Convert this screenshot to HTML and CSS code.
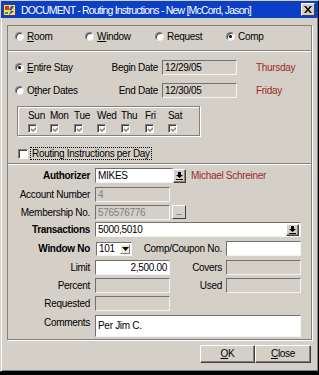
FILE: index.html
```html
<!DOCTYPE html>
<html lang="en">
<head>
    <meta charset="UTF-8">
    <title>DOCUMENT - Routing Instructions</title>
    <link rel="stylesheet" href="styles.css">
</head>
<body>
    <div class="window">
        <div class="titlebar">
            <svg class="app-icon" width="14" height="14" viewBox="0 0 14 14">
                <rect x="0.5" y="1.5" width="12" height="11" fill="#f4e04a" stroke="#3a3a9a"/>
                <rect x="2" y="3" width="4" height="4" fill="#d23030"/>
                <path d="M8 3 L11 3 L8 8 L11 8 L6 12 L8 7 L6 7 Z" fill="#2050d0"/>
                <rect x="2" y="9" width="3" height="2" fill="#30a040"/>
            </svg>
            <span class="title">DOCUMENT - Routing Instructions - New [McCord, Jason]</span>
            <span class="close-btn">
                <svg width="8" height="7" viewBox="0 0 8 7"><path d="M0 0h2l2 2.5L6 0h2L5 3.5 8 7H6L4 4.5 2 7H0l3-3.5z"/></svg>
            </span>
        </div>

        <div class="client">
            <div class="frame">
                <div class="section type-row">
                    <span class="radio"><span class="dot"></span><span><u>R</u>oom</span></span>
                    <span class="radio"><span class="dot"></span><span><u>W</u>indow</span></span>
                    <span class="radio"><span class="dot"></span><span>Request</span></span>
                    <span class="radio"><span class="dot on"></span><span>Comp</span></span>
                </div>

                <div class="section dates">
                    <div class="date-grid">
                        <span class="radio"><span class="dot on"></span><span><u>E</u>ntire Stay</span></span>
                        <span class="lbl">Begin Date</span>
                        <span class="field off dark">12/29/05</span>
                        <span class="day-name">Thursday</span>

                        <span class="radio"><span class="dot"></span><span>O<u>t</u>her Dates</span></span>
                        <span class="lbl">End Date</span>
                        <span class="field off dark">12/30/05</span>
                        <span class="day-name">Friday</span>
                    </div>

                    <div class="days">
                        <div class="day"><span>Sun</span><span class="cb small checked"></span></div>
                        <div class="day"><span>Mon</span><span class="cb small checked"></span></div>
                        <div class="day"><span>Tue</span><span class="cb small checked"></span></div>
                        <div class="day"><span>Wed</span><span class="cb small checked"></span></div>
                        <div class="day"><span>Thu</span><span class="cb small checked"></span></div>
                        <div class="day"><span>Fri</span><span class="cb small checked"></span></div>
                        <div class="day"><span>Sat</span><span class="cb small checked"></span></div>
                    </div>

                    <div class="per-day">
                        <span class="cb"></span>
                        <span class="focus">Routing Instructions per Day</span>
                    </div>
                </div>

                <div class="section details">
                    <span class="lbl bold">Authorizer</span>
                    <div class="span-3 row-flex">
                        <span class="field auth">MIKES</span>
                        <span class="drop-btn">
                            <svg width="7" height="8" viewBox="0 0 7 8"><path d="M2 0h3v3h2L3.5 6 0 3h2z"/><rect y="7" width="7" height="1"/></svg>
                        </span>
                        <span class="auth-name">Michael Schreiner</span>
                    </div>

                    <span class="lbl">Account Number</span>
                    <span class="field off">4</span>

                    <span class="lbl">Membership No.</span>
                    <span class="field off">576576776</span>
                    <span class="dots-btn">...</span>

                    <span class="lbl bold">Transactions</span>
                    <div class="span-3 field combo">
                        <span class="combo-text">5000,5010</span>
                        <span class="drop-btn">
                            <svg width="7" height="8" viewBox="0 0 7 8"><path d="M2 0h3v3h2L3.5 6 0 3h2z"/><rect y="7" width="7" height="1"/></svg>
                        </span>
                    </div>

                    <span class="lbl bold">Window No</span>
                    <div class="span-3 row-flex">
                        <span class="select">
                            <span class="select-text">101</span>
                            <span class="select-btn">
                                <svg width="7" height="4" viewBox="0 0 7 4"><path d="M0 0h7L3.5 4z"/></svg>
                            </span>
                        </span>
                        <span class="lbl2 grow">Comp/Coupon No.</span>
                        <span class="field wide"></span>
                    </div>

                    <span class="lbl">Limit</span>
                    <span class="field num">2,500.00</span>
                    <span class="lbl2">Covers</span>
                    <span class="field off"></span>

                    <span class="lbl">Percent</span>
                    <span class="field off"></span>
                    <span class="lbl2">Used</span>
                    <span class="field off"></span>

                    <span class="lbl">Requested</span>
                    <span class="field off"></span>

                    <span class="lbl">Comments</span>
                    <span class="span-3 field memo">Per Jim C.</span>
                </div>
            </div>

            <div class="actions">
                <span class="btn ok"><u>O</u>K</span>
                <span class="btn close"><u>C</u>lose</span>
            </div>
        </div>
    </div>
</body>
</html>
```

FILE: styles.css
```css
body {
    margin: 0;
    background-color: #000;
    font-family: 'Liberation Sans', Arial, sans-serif;
    font-size: 10px;
    letter-spacing: -0.3px;
    color: #000;
}
.window {
    width: 319px;
    height: 372px;
    box-sizing: border-box;
    background-color: #d4d0c8;
    border: 1px solid;
    border-color: #d4d0c8 #000 #000 #d4d0c8;
    box-shadow: inset 1px 1px 0 #fff, inset -1px -1px 0 #808080;
}
.titlebar {
    height: 17px;
    display: flex;
    align-items: center;
    background-color: #0a3fc6;
    color: #fff;
    font-size: 10.5px;
    letter-spacing: -0.8px;
}
.app-icon {
    margin: 0 4px 0 2px;
    flex: none;
}
.title {
    flex: 1;
    white-space: nowrap;
    overflow: hidden;
}
.close-btn {
    width: 12px;
    height: 11px;
    margin-right: 3px;
    display: flex;
    align-items: center;
    justify-content: center;
    background-color: #d4d0c8;
    border: 1px solid;
    border-color: #fff #404040 #404040 #fff;
}
.client {
    padding: 7px 6px 0 6px;
}
.frame {
    border: 1px solid #808080;
    box-shadow: 1px 1px 0 #fff;
}
.section {
    box-sizing: border-box;
}
.section + .section {
    border-top: 1px solid #808080;
    box-shadow: inset 0 1px 0 #fff;
}

/* radio buttons / checkboxes */
.radio {
    display: flex;
    align-items: center;
    gap: 3px;
    white-space: nowrap;
}
.dot {
    width: 9px;
    height: 9px;
    box-sizing: border-box;
    border-radius: 50%;
    background-color: #fff;
    border: 1px solid;
    border-color: #808080 #e8e8e8 #e8e8e8 #808080;
    box-shadow: inset 1px 1px 0 #404040;
    display: flex;
    align-items: center;
    justify-content: center;
}
.dot.on::after {
    content: "";
    width: 3px;
    height: 3px;
    border-radius: 50%;
    background-color: #000;
}
.cb {
    width: 10px;
    height: 10px;
    box-sizing: border-box;
    background-color: #fff;
    border: 1px solid;
    border-color: #808080 #fff #fff #808080;
    box-shadow: inset 1px 1px 0 #404040;
    display: block;
}
.cb.small {
    width: 9px;
    height: 9px;
    background-color: #f2f2ee;
}
.cb.checked {
    background-image: url("data:image/svg+xml,%3Csvg xmlns='http://www.w3.org/2000/svg' width='7' height='7'%3E%3Cpath d='M1 3l2 2 4-4' fill='none' stroke='%23808080' stroke-width='1.3'/%3E%3C/svg%3E");
    background-repeat: no-repeat;
    background-position: 1px 1px;
}

/* section 1 */
.type-row {
    height: 24px;
    padding: 0 0 3px 7px;
    display: grid;
    grid-template-columns: 70px 70px 71px 70px;
    align-items: center;
}

/* section 2 */
.dates {
    height: 113px;
}
.date-grid {
    display: grid;
    grid-template-columns: 89px 50px 75px auto;
    grid-auto-rows: 15px;
    column-gap: 4px;
    row-gap: 8px;
    align-items: center;
    padding: 9px 0 0 7px;
}
.lbl {
    text-align: right;
    white-space: nowrap;
}
.day-name {
    margin-left: 15px;
    color: #a02828;
}
.field {
    height: 15px;
    box-sizing: border-box;
    background-color: #fff;
    border: 1px solid;
    border-color: #707070 #f4f4f4 #f4f4f4 #707070;
    padding: 0 2px;
    line-height: 13px;
    white-space: nowrap;
    overflow: hidden;
}
.field.off {
    background-color: #d4d0c8;
    color: #808080;
}
.field.off.dark {
    color: #000;
}
.days {
    margin: 8px 0 0 9px;
    width: 183px;
    height: 30px;
    box-sizing: border-box;
    border: 1px solid #808080;
    box-shadow: inset 1px 1px 0 #fff, 1px 1px 0 #fff;
    padding: 3px 0 0 10px;
    display: grid;
    grid-template-columns: 22px 24px 23px 24px 24px 23px auto;
}
.day {
    display: flex;
    flex-direction: column;
    align-items: flex-start;
    gap: 2px;
    line-height: 12px;
}
.per-day {
    margin: 11px 0 0 10px;
    display: flex;
    align-items: center;
    gap: 2px;
}
.focus {
    border: 1px dotted #000;
    padding: 0 1px;
    line-height: 11px;
}

/* section 3 */
.details {
    height: 176px;
    padding-top: 4px;
    display: grid;
    grid-template-columns: 87px 75px 56px 75px;
    grid-template-rows: 19px 18px 17px 19px 19px 18px 18px 19px 22px;
    align-items: start;
}
.details .lbl {
    grid-column: 1;
    line-height: 15px;
    padding-right: 5px;
}
.bold {
    font-weight: bold;
}
.lbl2 {
    line-height: 15px;
    padding-right: 4px;
    text-align: right;
    white-space: nowrap;
}
.span-3 {
    grid-column: 2 / 5;
}
.row-flex {
    display: flex;
    align-items: center;
}
.grow {
    flex: 1;
}
.field.auth {
    width: 78px;
}
.field.wide {
    width: 75px;
}
.auth-name {
    margin-left: 5px;
    color: #a02828;
    white-space: nowrap;
}
.drop-btn {
    width: 13px;
    height: 14px;
    box-sizing: border-box;
    display: flex;
    align-items: center;
    justify-content: center;
    background-color: #d4d0c8;
    border: 1px solid;
    border-color: #fff #404040 #404040 #fff;
    box-shadow: inset -1px -1px 0 #808080;
}
.dots-btn {
    margin-left: 2px;
    width: 14px;
    height: 14px;
    box-sizing: border-box;
    background-color: #d4d0c8;
    border: 1px solid;
    border-color: #fff #404040 #404040 #fff;
    text-align: center;
    line-height: 14px;
    font-size: 8px;
}
.combo {
    display: flex;
    align-items: center;
    padding-right: 1px;
}
.combo .drop-btn {
    height: 12px;
}
.combo-text {
    flex: 1;
}
.select {
    margin-left: 1px;
    width: 36px;
    height: 14px;
    box-sizing: border-box;
    background-color: #fff;
    border: 1px solid;
    border-color: #707070 #f4f4f4 #f4f4f4 #707070;
    display: flex;
    align-items: center;
    padding: 0 1px 0 2px;
}
.select-text {
    flex: 1;
}
.select-btn {
    width: 10px;
    height: 10px;
    box-sizing: border-box;
    display: flex;
    align-items: center;
    justify-content: center;
    background-color: #ece9d8;
    border: 1px solid;
    border-color: #fff #808080 #808080 #fff;
}
.field.num {
    text-align: right;
}
.field.memo {
    height: 22px;
    line-height: 20px;
}

/* buttons */
.actions {
    margin-top: 5px;
    display: flex;
    justify-content: flex-end;
}
.btn {
    height: 18px;
    box-sizing: border-box;
    background-color: #d4d0c8;
    border: 1px solid;
    border-color: #fff #404040 #404040 #fff;
    box-shadow: inset -1px -1px 0 #808080;
    text-align: center;
    line-height: 16px;
}
.btn.ok {
    width: 55px;
}
.btn.close {
    width: 56px;
    margin-right: 1px;
}
```
